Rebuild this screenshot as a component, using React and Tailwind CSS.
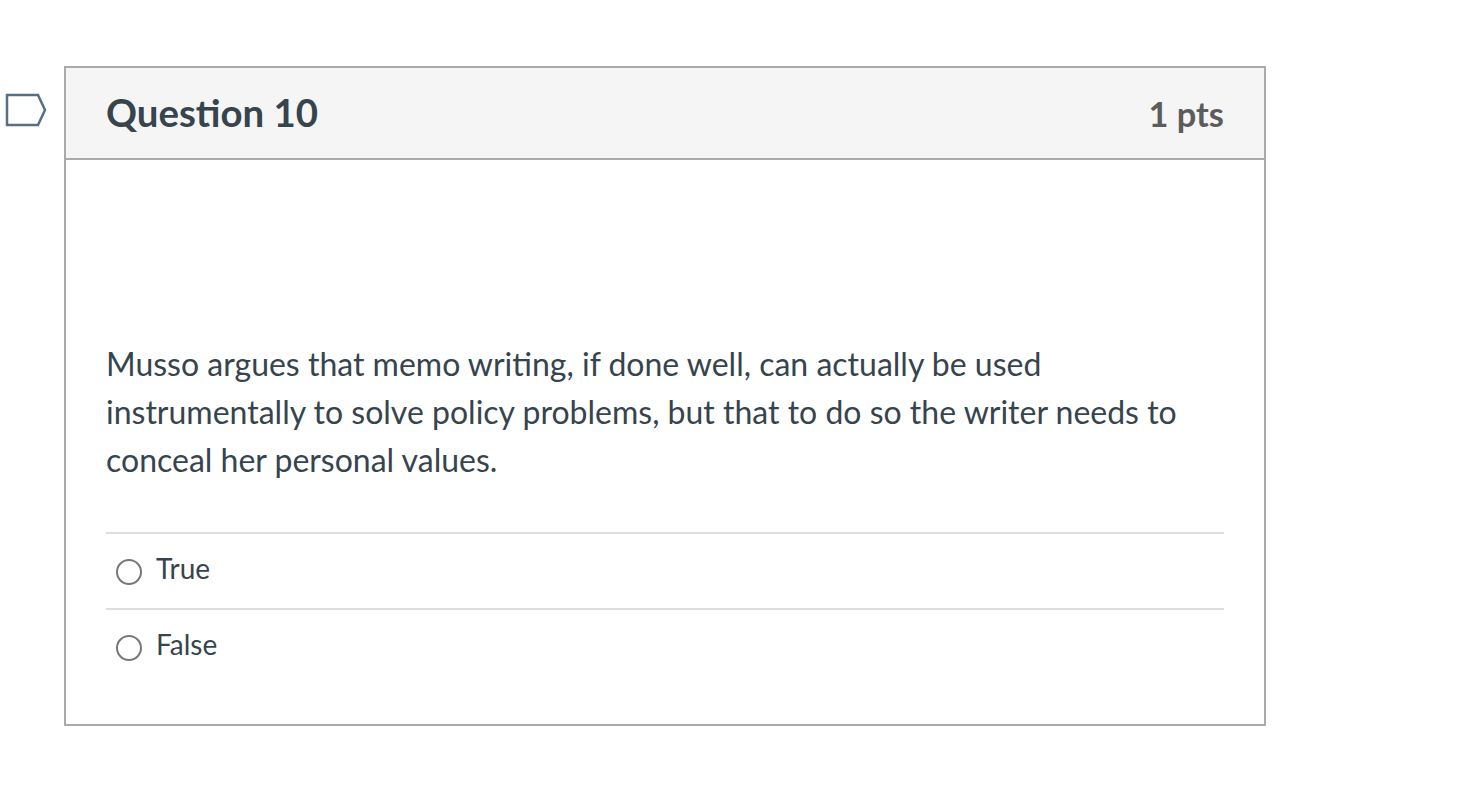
const answers = ['True', 'False'];

function Flag() {
  return (
    <svg width="42" height="34" viewBox="0 0 42 34" fill="none" className="mt-[27px] ml-[5px] shrink-0">
      <path d="M2 2H33L40 17L33 32H2Z" fill="#fff" stroke="#557086" strokeWidth="2.5" />
    </svg>
  );
}

export default function App() {
  return (
    <div className="flex h-[790px] bg-white pt-[66px] font-['Lato',sans-serif] text-[#36444e]">
      <div className="w-[64px] shrink-0">
        <Flag />
      </div>
      <div className="h-[660px] w-[1202px] border-2 border-[#aaaaaa]">
        <div className="flex h-[92px] items-center justify-between border-b-2 border-[#aaaaaa] bg-[#f5f5f5] px-[40px]">
          <h2 className="text-[38.4px] font-bold">Question 10</h2>
          <span className="mt-[2px] text-[34.4px] font-bold text-[#5c5c5c]">1 pts</span>
        </div>
        <div className="px-[40px] pt-[180px]">
          <p className="text-[32px] leading-[48px]">
            Musso argues that memo writing, if done well, can actually be used
            <br />
            instrumentally to solve policy problems, but that to do so the writer needs to
            <br />
            conceal her personal values.
          </p>
          <div className="mt-[48px]">
            {answers.map((answer) => (
              <div key={answer} className="flex h-[76px] items-center border-t-2 border-[#dddddd] pl-[10px]">
                <span className="mt-[2px] h-[26px] w-[26px] rounded-full border-2 border-[#777777]" />
                <span className="mb-[6px] ml-[14px] text-[28px]">{answer}</span>
              </div>
            ))}
          </div>
        </div>
      </div>
    </div>
  );
}
